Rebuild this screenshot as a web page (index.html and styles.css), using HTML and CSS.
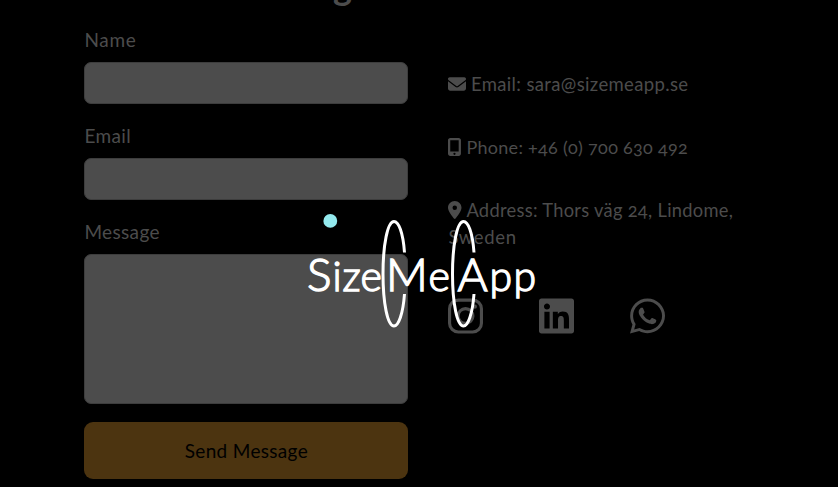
FILE: index.html
```
<!DOCTYPE html>
<html lang="en">
<head>
<meta charset="utf-8">
<title>SizeMeApp</title>
<link rel="stylesheet" href="styles.css">
</head>
<body>
<h2 class="heading">g</h2>
<main class="contact">
  <form class="form">
    <label class="label name" for="name">Name</label>
    <input class="field" id="name" type="text">
    <label class="label mail" for="email">Email</label>
    <input class="field" id="email" type="text">
    <label class="label message" for="message">Message</label>
    <textarea class="field area" id="message"></textarea>
    <button class="send" type="button"><span>Send Message</span></button>
  </form>
  <section class="info">
    <p class="row"><svg class="icon" width="18" height="18" viewBox="0 0 512 512"><path d="M48 64C21.5 64 0 85.5 0 112c0 15.1 7.1 29.3 19.2 38.4L236.8 313.6c11.4 8.5 27 8.5 38.4 0L492.8 150.4c12.1-9.1 19.2-23.3 19.2-38.4c0-26.5-21.5-48-48-48H48zM0 176V384c0 35.3 28.7 64 64 64H448c35.3 0 64-28.7 64-64V176L294.4 339.2c-22.8 17.1-54 17.1-76.8 0L0 176z"/></svg><span class="t-email">Email: sara@sizemeapp.se</span></p>
    <p class="row"><svg class="icon" width="13.5" height="18" viewBox="0 0 384 512"><path fill-rule="evenodd" d="M0 64C0 28.700 28.700 0 64 0H304c35.300 0 64 28.700 64 64V448c0 35.300-28.700 64-64 64H64c-35.300 0-64-28.700-64-64V64zM216 448a32 32 0 1 0-64 0 32 32 0 1 0 64 0zM304 64H64V384H304V64z"/></svg><span class="t-phone">Phone: +46 (0) 700 630 492</span></p>
    <p class="row"><svg class="icon" width="13.5" height="18" viewBox="0 0 384 512"><path fill-rule="evenodd" d="M215.700 499.200C267 435 384 279.400 384 192C384 86 298 0 192 0S0 86 0 192c0 87.400 117 243 168.300 307.200c12.300 15.300 35.100 15.300 47.400 0zM192 128a64 64 0 1 1 0 128 64 64 0 1 1 0-128z"/></svg><span class="t-addr">Address: Thors väg 24, Lindome,</span><br><span class="t-city">Sweden</span></p>
    <div class="social">
      <svg width="35" height="40" viewBox="0 0 448 512"><g fill="none" stroke="currentColor" stroke-width="40"><rect x="20" y="52" width="408" height="408" rx="112"/><circle cx="224" cy="256" r="95"/></g><circle cx="343.600" cy="136.400" r="27"/></svg>
      <svg width="35" height="40" viewBox="0 0 448 512"><path d="M416 32H31.900C14.300 32 0 46.500 0 64.300v383.400C0 465.500 14.300 480 31.900 480H416c17.600 0 32-14.500 32-32.300V64.300c0-17.800-14.400-32.300-32-32.300zM135.400 416H69V202.200h66.500V416zm-33.200-243c-21.300 0-38.500-17.300-38.500-38.500S80.900 96 102.200 96c21.200 0 38.500 17.300 38.500 38.500 0 21.300-17.200 38.500-38.500 38.500zm282.100 243h-66.400V312c0-24.800-.5-56.700-34.500-56.700-34.600 0-39.900 27-39.900 54.900V416h-66.400V202.200h63.700v29.200h.9c8.900-16.800 30.600-34.500 62.900-34.500 67.200 0 79.700 44.300 79.700 101.900V416z"/></svg>
      <svg width="35" height="40" viewBox="0 0 448 512"><path d="M380.900 97.100C339 55.100 283.200 32 223.900 32c-122.400 0-222 99.600-222 222 0 39.100 10.200 77.300 29.600 111L0 480l117.700-30.900c32.400 17.700 68.900 27 106.100 27h.1c122.300 0 224.100-99.600 224.100-222 0-59.300-25.200-115-67.100-157zm-157 341.600c-33.200 0-65.700-8.900-94-25.700l-6.700-4-69.800 18.300L72 359.200l-4.400-7c-18.500-29.400-28.200-63.300-28.200-98.200 0-101.700 82.800-184.500 184.600-184.500 49.300 0 95.600 19.200 130.400 54.100 34.800 34.900 56.200 81.200 56.100 130.500 0 101.800-84.900 184.600-186.600 184.600zm101.200-138.200c-5.500-2.800-32.800-16.200-37.900-18-5.100-1.900-8.800-2.800-12.500 2.800-3.700 5.600-14.300 18-17.600 21.800-3.200 3.700-6.500 4.200-12 1.400-32.600-16.300-54-29.100-75.500-66-5.700-9.800 5.700-9.100 16.300-30.300 1.800-3.700.9-6.900-.5-9.700-1.400-2.800-12.500-30.100-17.100-41.200-4.500-10.800-9.100-9.300-12.500-9.500-3.200-.2-6.900-.2-10.600-.2-3.700 0-9.700 1.400-14.800 6.900-5.100 5.600-19.400 19-19.400 46.300 0 27.300 19.900 53.700 22.600 57.400 2.800 3.700 39.100 59.700 94.800 83.800 35.200 15.200 49 16.500 66.600 13.900 10.700-1.600 32.800-13.400 37.400-26.400 4.600-13 4.600-24.100 3.200-26.400-1.300-2.500-5-3.900-10.500-6.600z"/></svg>
    </div>
  </section>
</main>
<!-- Loading overlay: logo with orbiting dot -->
<svg class="loader" width="245" height="135" viewBox="300 205 245 135">
  <circle cx="330.300" cy="220.900" r="6.900" fill="#93e9ee"/>
  <g class="logo">
    <text x="307 332.500 342.500 360.500" y="290.500">S<tspan class="low">ize</tspan></text>
    <text x="386 428.500" y="290.500">M<tspan class="low">e</tspan></text>
    <text x="457.500 489.500 513.500" y="290.500">A<tspan class="low">pp</tspan></text>
  </g>
  <g fill="none" stroke="#fff" stroke-width="3">
    <path d="M404.500 252.500C403 232 398.500 221.500 394 221.500C387.500 221.500 383 245 383 274S387.500 326 394 326C398.500 326 403 314 404.500 294"/>
    <path d="M474 252.500C472.500 232 468 221.500 463.500 221.500C457 221.500 452.500 245 452.500 274S457 326 463.500 326C468 326 472.500 314 474 294"/>
  </g>
</svg>
</body>
</html>
```
FILE: styles.css
```
* { box-sizing: border-box; }
body {
  margin: 0;
  height: 487px;
  overflow: hidden;
  background: #000;
  color: #4c4c4c;
  font: 18px/27px Lato, "Open Sans", sans-serif;
}
.heading {
  height: 60px;
  margin: -34px 0 0 333px;
  font-size: 36px;
  line-height: 40px;
}
.contact {
  display: grid;
  grid-template-columns: 324px 325px;
  column-gap: 40px;
  margin-left: 84.4px;
}
.form { display: flex; flex-direction: column; align-items: stretch; }
.label { height: 27px; margin-bottom: 9px; font-size: 19px; letter-spacing: .35px; }
.name { letter-spacing: .7px; }
.field {
  width: 324px;
  height: 42px;
  margin: 0 0 18px;
  border: 1px solid #3d3d3d;
  border-radius: 7px;
  background: #4c4c4c;
}
.area { height: 150px; display: block; margin-bottom: 18px; resize: none; }
.send {
  height: 56.5px;
  border: 0;
  border-radius: 9px;
  background: #4c3410;
  color: #000;
  font: inherit;
  font-size: 19px;
  letter-spacing: .32px;
}
.info { padding-top: 45px; }
.row { margin: 0 0 36px; white-space: nowrap; }
.icon { vertical-align: -2px; margin-right: 4.5px; }
.icon, .social svg { fill: currentColor; }
.row span { font-variant-numeric: oldstyle-nums; }
.t-email { font-size: 18.5px; letter-spacing: .36px; }
.t-phone { letter-spacing: .29px; }
.t-addr { font-size: 18.3px; letter-spacing: .3px; }
.t-city { font-size: 18.5px; letter-spacing: .65px; }
.social { display: flex; gap: 56px; margin: 44.5px 0 0 -.5px; }
.loader { position: absolute; left: 300px; top: 205px; }
.logo { font: 300 46px Lato, sans-serif; fill: #fff; stroke: #fff; stroke-width: 1.4px; }
.low { font-size: 41px; }
```
